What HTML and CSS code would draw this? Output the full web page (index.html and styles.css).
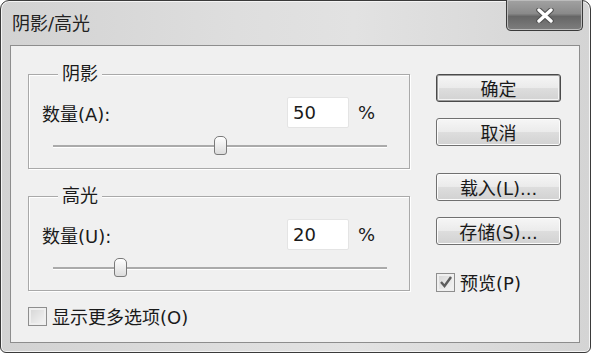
FILE: index.html
```html
<!DOCTYPE html>
<html lang="zh-CN">

<head>
    <meta charset="UTF-8">
    <title>阴影/高光</title>
    <link rel="stylesheet" href="styles.css">
</head>

<body>
    <div class="window">
        <div class="titlebar">
            <span class="title">阴影/高光</span>
            <button class="close">
                <svg width="20" height="15" viewBox="0 0 20 15">
                    <path d="M4 2 L16 13 M16 2 L4 13" stroke="#505050" stroke-width="5.5" stroke-linecap="round"/>
                    <path d="M4 2 L16 13 M16 2 L4 13" stroke="#ffffff" stroke-width="3.4" stroke-linecap="round"/>
                </svg>
            </button>
        </div>

        <div class="client">
            <div class="left">
                <div class="group">
                    <div class="legend">阴影</div>
                    <div class="row">
                        <label for="shadowAmount">数量(A):</label>
                        <input id="shadowAmount" type="text" value="50">
                        <span class="pct">%</span>
                    </div>
                    <div class="slider">
                        <div class="track"><span class="thumb" style="left: 50%"></span></div>
                    </div>
                </div>

                <div class="group second">
                    <div class="legend">高光</div>
                    <div class="row">
                        <label for="highlightAmount">数量(U):</label>
                        <input id="highlightAmount" type="text" value="20">
                        <span class="pct">%</span>
                    </div>
                    <div class="slider">
                        <div class="track"><span class="thumb" style="left: 20%"></span></div>
                    </div>
                </div>

                <label class="check more"><span class="box"></span>显示更多选项(O)</label>
            </div>

            <div class="right">
                <button class="btn default">确定</button>
                <button class="btn">取消</button>
                <button class="btn load">载入(L)...</button>
                <button class="btn">存储(S)...</button>
                <label class="check preview">
                    <span class="box checked">
                        <svg width="14" height="14" viewBox="0 0 14 14">
                            <path d="M2 7 L5.5 11 L12 2" fill="none" stroke="#5c5c5c" stroke-width="2.4"/>
                        </svg>
                    </span>预览(P)
                </label>
            </div>
        </div>
    </div>
</body>

</html>
```

FILE: styles.css
```css
body {
    margin: 0;
    font-family: "DejaVu Sans", "Noto Sans CJK SC", sans-serif;
    font-size: 18px;
    color: #1a1a1a;
    background: #ffffff;
}

.window {
    width: 591px;
    height: 353px;
    box-sizing: border-box;
    border: 1px solid #3a3a3a;
    border-radius: 9px 9px 6px 6px;
    padding: 0 10px 9px 9px;
    background: linear-gradient(to right, #d2d2d2, #dedede 40%, #e2e2e2 60%, #d4d4d4);
    box-shadow: inset 0 0 0 1px #f4f4f4;
}

.titlebar {
    height: 44px;
    display: flex;
    align-items: flex-start;
    justify-content: space-between;
}

.title {
    margin: 12px 0 0 2px;
    line-height: 22px;
    color: #222;
}

.close {
    width: 77px;
    height: 31px;
    margin: -1px -3px 0 0;
    border: 1px solid #3a3a3a;
    border-top: none;
    border-radius: 0 0 5px 5px;
    background: linear-gradient(#a2a2a2, #8a8a8a 45%, #666666 55%, #7e7e7e);
    box-shadow: inset 0 0 0 1px #bcbcbc;
    display: flex;
    align-items: center;
    justify-content: center;
    padding: 0;
}

.client {
    height: 298px;
    box-sizing: border-box;
    border: 1px solid #8d8d8d;
    background: #f0f0f0;
    display: flex;
    padding: 28px 0 0 17px;
}

.left {
    width: 382px;
}

.group {
    height: 95px;
    box-sizing: border-box;
    border: 1px solid #a9a9a9;
    box-shadow: 1px 1px 0 #ffffff, inset 1px 1px 0 #ffffff;
    padding: 0 0 0 13px;
}

.group.second {
    margin-top: 27px;
}

.legend {
    display: table;
    margin: -12px 0 0 16px;
    padding: 0 4px;
    line-height: 22px;
    background: #f0f0f0;
}

.row {
    display: flex;
    align-items: center;
    margin-top: 12px;
    height: 31px;
}

.row label {
    width: 245px;
}

.row input {
    width: 62px;
    height: 31px;
    box-sizing: border-box;
    border: 1px solid #e4e4e4;
    border-radius: 2px;
    background: #ffffff;
    padding: 0 0 0 5px;
    font: inherit;
    color: #1a1a1a;
}

.pct {
    margin-left: 9px;
}

.slider {
    height: 19px;
    margin-top: 9px;
    padding: 0 22px 0 11px;
    display: flex;
    align-items: center;
}

.track {
    position: relative;
    flex: 1;
    height: 2px;
    background: #aaaaaa;
    border-bottom: 1px solid #ffffff;
}

.thumb {
    position: absolute;
    top: -9px;
    width: 13px;
    height: 19px;
    margin-left: -6px;
    box-sizing: border-box;
    border: 1px solid #7a7a7a;
    border-radius: 5px 5px 3px 3px;
    background: linear-gradient(#ffffff, #dcdcdc);
}

.check {
    display: flex;
    align-items: center;
    gap: 5px;
}

.check.more {
    margin-top: 12px;
}

.box {
    width: 19px;
    height: 19px;
    box-sizing: border-box;
    border: 1px solid #8e8e8e;
    background: linear-gradient(135deg, #d4d4d4, #f6f6f6);
    box-shadow: inset 0 0 0 2px #efefef;
    display: flex;
    align-items: center;
    justify-content: center;
}

.right {
    margin-left: 26px;
    width: 125px;
    display: flex;
    flex-direction: column;
}

.btn {
    height: 28px;
    box-sizing: border-box;
    border: 1px solid #707070;
    border-radius: 3px;
    background: linear-gradient(#f6f6f6, #ebebeb 48%, #dddddd 52%, #d2d2d2);
    box-shadow: inset 0 0 0 1px #fcfcfc;
    font: inherit;
    color: #1a1a1a;
    padding: 0;
    margin-bottom: 16px;
}

.btn.default {
    border-color: #4a4a4a;
    box-shadow: inset 0 0 0 1px #9c9c9c, inset 0 0 0 2px #f4f4f4;
}

.btn.load {
    margin-top: 11px;
}

.check.preview {
    margin-top: 8px;
}
```
